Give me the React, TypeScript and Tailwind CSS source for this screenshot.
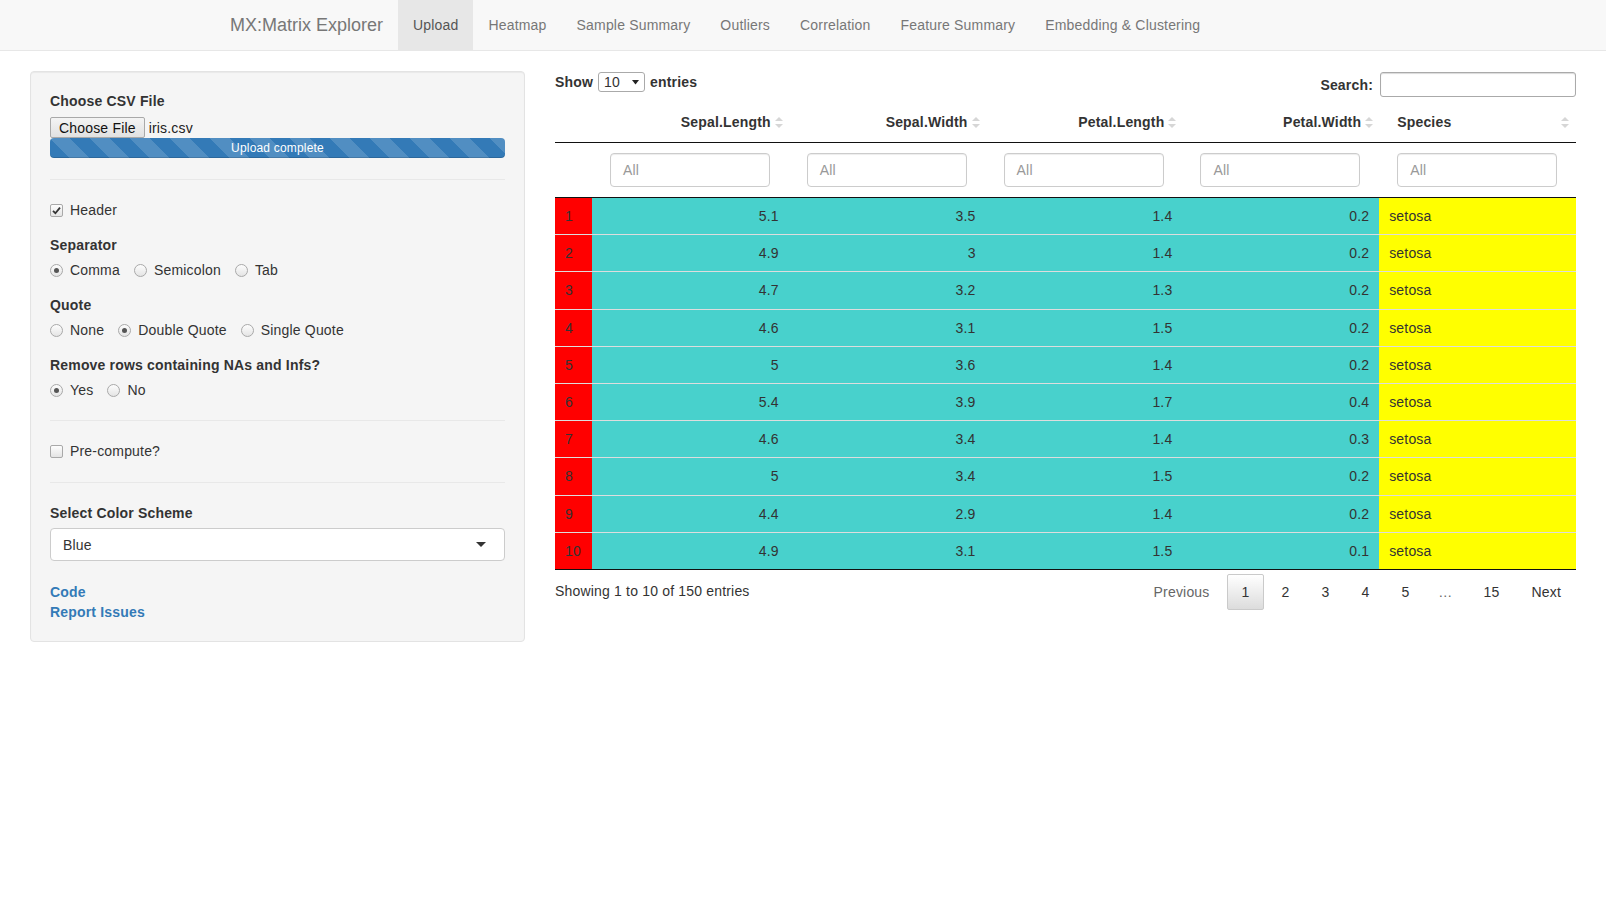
import React from "react";

const tabs = [
  "Upload",
  "Heatmap",
  "Sample Summary",
  "Outliers",
  "Correlation",
  "Feature Summary",
  "Embedding & Clustering",
];

const rows = [
  [5.1, 3.5, 1.4, 0.2],
  [4.9, 3, 1.4, 0.2],
  [4.7, 3.2, 1.3, 0.2],
  [4.6, 3.1, 1.5, 0.2],
  [5, 3.6, 1.4, 0.2],
  [5.4, 3.9, 1.7, 0.4],
  [4.6, 3.4, 1.4, 0.3],
  [5, 3.4, 1.5, 0.2],
  [4.4, 2.9, 1.4, 0.2],
  [4.9, 3.1, 1.5, 0.1],
];

const numCols = ["Sepal.Length", "Sepal.Width", "Petal.Length", "Petal.Width"];

const Radio = ({ checked }: { checked?: boolean }) => (
  <span className="w-[13px] h-[13px] rounded-full border border-[#a9a9a9] bg-[linear-gradient(#fdfdfd,#e4e4e4)] flex items-center justify-center shrink-0">
    {checked && <span className="w-[5px] h-[5px] rounded-full bg-[#555]" />}
  </span>
);

const Checkbox = ({ checked }: { checked?: boolean }) => (
  <span className="w-[13px] h-[13px] rounded-[2px] border border-[#a9a9a9] bg-[linear-gradient(#fdfdfd,#e4e4e4)] flex items-center justify-center shrink-0">
    {checked && (
      <svg width="9" height="9" viewBox="0 0 9 9">
        <path d="M1 4.8 L3.4 7.2 L8 1.6" stroke="#333" strokeWidth="1.8" fill="none" />
      </svg>
    )}
  </span>
);

const RadioGroup = ({ options, selected }: { options: string[]; selected: string }) => (
  <div className="flex items-center gap-[14px] h-[20px]">
    {options.map((o) => (
      <label key={o} className="flex items-center gap-[7px]">
        <Radio checked={o === selected} />
        <span>{o}</span>
      </label>
    ))}
  </div>
);

const SortIcon = () => (
  <svg width="8" height="13" viewBox="0 0 8 13" className="shrink-0">
    <polygon points="0,5 4,1 8,5" fill="#d6d6d6" />
    <polygon points="0,8 4,12 8,8" fill="#d6d6d6" />
  </svg>
);

const App: React.FC = () => {
  return (
    <div className="min-h-screen bg-white text-[14px] leading-[20px] tracking-[0.18px] text-[#333] font-['Liberation_Sans',Arial,sans-serif]">
      {/* Navbar */}
      <nav className="h-[51px] bg-[#f8f8f8] border-b border-[#e7e7e7]">
        <div className="ml-[215px] flex h-[50px]">
          <div className="px-[15px] py-[15px] text-[18px] leading-[20px] tracking-normal text-[#777]">
            MX:Matrix Explorer
          </div>
          {tabs.map((t) => (
            <div
              key={t}
              className={
                t === "Upload"
                  ? "px-[15px] py-[15px] bg-[#e7e7e7] text-[#555]"
                  : "px-[15px] py-[15px] text-[#777]"
              }
            >
              {t}
            </div>
          ))}
        </div>
      </nav>

      <div className="flex px-[30px] gap-[30px] mt-[20px]">
        {/* Sidebar */}
        <div className="w-[495px] shrink-0">
          <div className="bg-[#f5f5f5] border border-[#e3e3e3] rounded-[4px] shadow-[inset_0_1px_1px_rgba(0,0,0,0.05)] p-[19px] flex flex-col">
            <div className="font-bold">Choose CSV File</div>
            <div className="flex items-center mt-[6px] h-[21px]">
              <div className="h-[21px] px-[8px] flex items-center border border-[#a9a9a9] rounded-[2px] bg-[linear-gradient(#f4f4f4,#e1e1e1)] text-[#111]">
                Choose File
              </div>
              <span className="ml-[4px] text-[#222]">iris.csv</span>
            </div>
            <div className="h-[20px] rounded-[4px] bg-[#337ab7] bg-[linear-gradient(45deg,rgba(255,255,255,.15)_25%,transparent_25%,transparent_50%,rgba(255,255,255,.15)_50%,rgba(255,255,255,.15)_75%,transparent_75%,transparent)] bg-[length:40px_40px] text-white text-[12px] leading-[20px] text-center shadow-[inset_0_-1px_0_rgba(0,0,0,0.15)]">
              Upload complete
            </div>

            <div className="mt-[21px] border-t border-[#e8e8e8]" />

            <label className="flex items-center gap-[7px] mt-[20px] h-[20px]">
              <Checkbox checked />
              <span>Header</span>
            </label>

            <div className="font-bold mt-[15px]">Separator</div>
            <div className="mt-[5px]">
              <RadioGroup options={["Comma", "Semicolon", "Tab"]} selected="Comma" />
            </div>

            <div className="font-bold mt-[15px]">Quote</div>
            <div className="mt-[5px]">
              <RadioGroup options={["None", "Double Quote", "Single Quote"]} selected="Double Quote" />
            </div>

            <div className="font-bold mt-[15px]">Remove rows containing NAs and Infs?</div>
            <div className="mt-[5px]">
              <RadioGroup options={["Yes", "No"]} selected="Yes" />
            </div>

            <div className="mt-[20px] border-t border-[#e8e8e8]" />

            <label className="flex items-center gap-[7px] mt-[20px] h-[20px]">
              <Checkbox />
              <span>Pre-compute?</span>
            </label>

            <div className="mt-[21px] border-t border-[#e8e8e8]" />

            <div className="font-bold mt-[20px]">Select Color Scheme</div>
            <div className="mt-[5px] h-[33px] bg-white border border-[#ccc] rounded-[4px] px-[12px] flex items-center justify-between">
              <span>Blue</span>
              <span className="w-0 h-0 border-x-[5px] border-x-transparent border-t-[5px] border-t-[#333] mr-[6px]" />
            </div>

            <div className="mt-[21px] font-bold text-[#337ab7]">Code</div>
            <div className="font-bold text-[#337ab7]">Report Issues</div>
          </div>
        </div>

        {/* Main table */}
        <div className="flex-1 min-w-0">
          <div className="flex justify-between items-start h-[31px]">
            <div className="flex items-center h-[20px] mt-[1px] font-bold">
              <span>Show</span>
              <div className="ml-[5px] mr-[5px] w-[47px] h-[20px] border border-[#aaa] rounded-[3px] flex items-center justify-between px-[5px] font-normal bg-white">
                <span>10</span>
                <svg width="7" height="6" viewBox="0 0 7 6">
                  <polygon points="0,1 7,1 3.5,5.5" fill="#222" />
                </svg>
              </div>
              <span>entries</span>
            </div>
            <div className="flex items-center mt-[1px] font-bold">
              <span>Search:</span>
              <div className="ml-[7px] w-[196px] h-[25px] border border-[#aaa] rounded-[3px] shadow-[inset_0_1px_1px_rgba(0,0,0,0.15)] bg-white" />
            </div>
          </div>

          <table className="w-full table-fixed border-collapse">
            <colgroup>
              <col className="w-[37px]" />
              <col />
              <col />
              <col />
              <col />
              <col />
            </colgroup>
            <thead>
              <tr className="border-b border-[#111]">
                <th className="py-[10px]" />
                {numCols.map((c) => (
                  <th key={c} className="py-[10px] pr-[6px] font-bold">
                    <div className="flex items-center justify-end gap-[4px]">
                      <span>{c}</span>
                      <SortIcon />
                    </div>
                  </th>
                ))}
                <th className="py-[10px] pl-[18px] pr-[7px] font-bold">
                  <div className="flex items-center justify-between">
                    <span>Species</span>
                    <SortIcon />
                  </div>
                </th>
              </tr>
              <tr className="border-b border-[#111]">
                <td className="py-[10px]" />
                {[...numCols, "Species"].map((c) => (
                  <td key={c} className="pt-[10px] pb-[10px] pl-[18px]">
                    <div className="w-[160px] h-[34px] border border-[#ccc] rounded-[4px] px-[12px] flex items-center text-[#999] bg-white shadow-[inset_0_1px_1px_rgba(0,0,0,0.075)]">
                      All
                    </div>
                  </td>
                ))}
              </tr>
            </thead>
            <tbody>
              {rows.map((r, i) => (
                <tr
                  key={i}
                  className={i === rows.length - 1 ? "border-b border-[#111]" : "border-b border-[#ddd]"}
                >
                  <td className="bg-[#ff0000] px-[10px] py-[8px] leading-[20.2px]">{i + 1}</td>
                  {r.map((v, j) => (
                    <td key={j} className="bg-[#48d1cc] px-[10px] py-[8px] leading-[20.2px] text-right">
                      {v}
                    </td>
                  ))}
                  <td className="bg-[#ffff00] px-[10px] py-[8px] leading-[20.2px]">setosa</td>
                </tr>
              ))}
            </tbody>
          </table>

          <div className="flex justify-between items-start">
            <div className="pt-[11px]">Showing 1 to 10 of 150 entries</div>
            <div className="pt-[4px] flex items-center">
              <span className="px-[14px] py-[7px] border border-transparent text-[#666]">Previous</span>
              <span className="ml-[2px] px-[14px] py-[7px] border border-[#cacaca] rounded-[2px] bg-[linear-gradient(#fff,#dcdcdc)]">
                1
              </span>
              {["2", "3", "4", "5"].map((p) => (
                <span key={p} className="ml-[2px] px-[14px] py-[7px] border border-transparent">
                  {p}
                </span>
              ))}
              <span className="px-[14px] py-[7px] text-[#666]">…</span>
              <span className="ml-[2px] px-[14px] py-[7px] border border-transparent">15</span>
              <span className="ml-[2px] px-[14px] py-[7px] border border-transparent">Next</span>
            </div>
          </div>
        </div>
      </div>
    </div>
  );
};

export default App;
